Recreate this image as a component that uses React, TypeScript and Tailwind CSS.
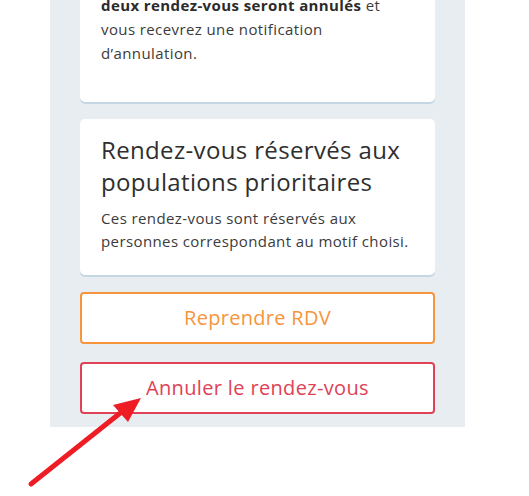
export default function App() {
  return (
    <div
      className="relative w-full h-[496px] overflow-hidden bg-white text-[#3b3b3b]"
      style={{ fontFamily: "'Open Sans', sans-serif" }}
    >
      {/* Panel */}
      <div className="ml-[50px] w-[415px] bg-[#e8edf2] px-[30px] pb-[13px] flex flex-col">
        {/* Cancel warning card */}
        <div className="-mt-[51px] bg-white rounded-[5px] shadow-[0_2px_0_#c5d7e3] pt-[20px] pb-[37px] pl-[21px] pr-[14px] text-[15px] leading-[24px] tracking-[0.4px]">
          Si vous annulez ce rendez-vous, les
          <br />
          <b className="font-bold text-[#2b2b2b]">deux rendez-vous seront annulés</b> et
          <br />
          vous recevrez une notification
          <br />
          d’annulation.
        </div>

        {/* Priority card */}
        <div className="mt-[17px] bg-white rounded-[5px] shadow-[0_2px_0_#c5d7e3] pt-[15px] pb-[22px] pl-[21px] pr-[12px]">
          <div className="text-[24px] leading-[32px] tracking-[0.35px] text-[#2f2f2f]">
            Rendez-vous réservés aux populations prioritaires
          </div>
          <p className="mt-[9px] text-[15px] leading-[23px] tracking-[0.4px]">
            Ces rendez-vous sont réservés aux personnes correspondant au motif choisi.
          </p>
        </div>

        {/* Buttons */}
        <button className="mt-[17px] h-[52px] w-full bg-white border-2 border-[#f7953d] rounded-[4px] text-[#f7953d] text-[20px] tracking-[0.3px]">
          Reprendre RDV
        </button>
        <button className="mt-[18px] h-[52px] w-full bg-white border-2 border-[#e04155] rounded-[4px] text-[#e04155] text-[20px] tracking-[0.35px]">
          Annuler le rendez-vous
        </button>
      </div>

      {/* Red annotation arrow */}
      <svg
        className="absolute left-0 top-0 pointer-events-none"
        width="529"
        height="496"
        viewBox="0 0 529 496"
      >
        <line x1="31" y1="484" x2="124" y2="410" stroke="#ee1d25" strokeWidth="5" strokeLinecap="round" />
        <polygon points="141,398 113,405 128,422" fill="#ee1d25" />
      </svg>
    </div>
  );
}
